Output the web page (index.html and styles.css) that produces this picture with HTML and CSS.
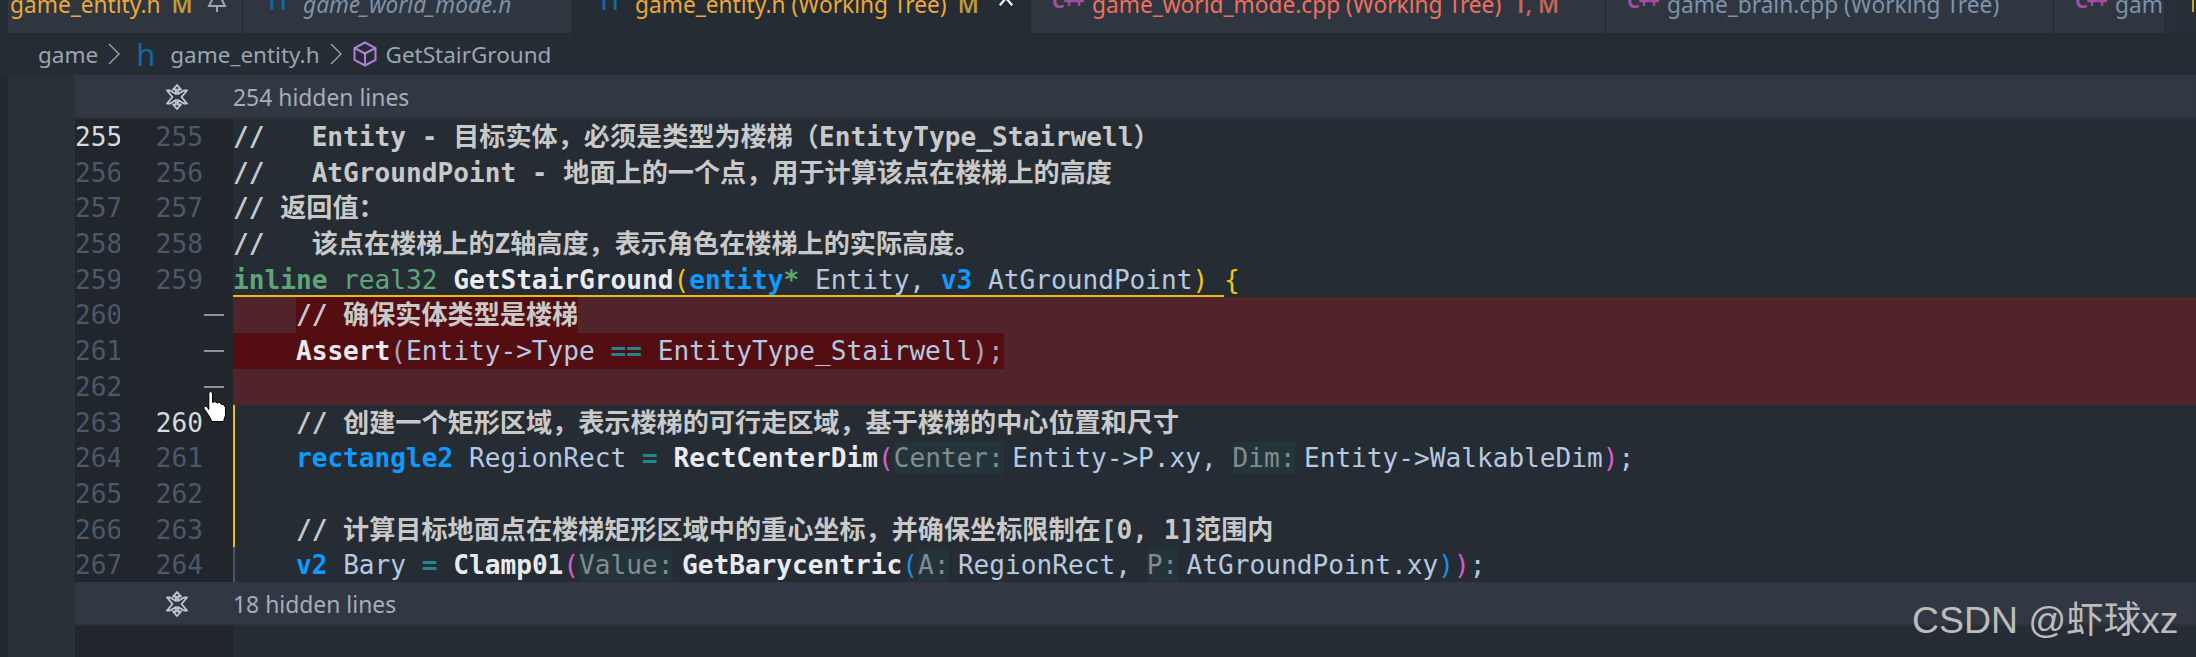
FILE: index.html
```html
<!DOCTYPE html>
<html lang="zh">
<head>
<meta charset="utf-8">
<title>game_entity.h</title>
<link rel="stylesheet" href="styles.css">
</head>
<body>
<div class="window">
  <div class="tabbar">
    <div class="tabs">
      <div class="tab t1"><span class="name gold">game_entity.h</span><span class="flag gold-flag">M</span>
        <svg class="pin" viewBox="0 0 20 14"><path d="M6 0 L2 8 H18 L14 0 M10 8 V14" fill="none" stroke="currentColor" stroke-width="2"/></svg></div>
      <div class="tab t2"><span class="hicon">h</span><span class="name italic">game_world_mode.h</span></div>
      <div class="tab t3 active"><span class="hicon">h</span><span class="name gold">game_entity.h (Working Tree)</span><span class="flag gold-flag">M</span>
        <svg class="close" viewBox="0 0 18 18"><path d="M2 0 L16 16 M16 0 L2 16" fill="none" stroke="currentColor" stroke-width="2.4"/></svg></div>
      <div class="tab t4"><span class="cicon">C++</span><span class="name red">game_world_mode.cpp (Working Tree)</span><span class="flag red-flag">T, M</span></div>
      <div class="tab t5"><span class="cicon">C++</span><span class="name blue">game_brain.cpp (Working Tree)</span></div>
      <div class="tab t6"><span class="cicon">C++</span><span class="name blue">game</span></div>
      <div class="tail"></div>
    </div>
  </div>
  <div class="crumbs">
    <span>game</span>
    <svg class="chev" viewBox="0 0 12 22"><path d="M1 1 L11 11 L1 21" fill="none" stroke="currentColor" stroke-width="1.4"/></svg>
    <span class="crumb-h">h</span>
    <span>game_entity.h</span>
    <svg class="chev" viewBox="0 0 12 22"><path d="M1 1 L11 11 L1 21" fill="none" stroke="currentColor" stroke-width="1.4"/></svg>
    <svg class="cube" viewBox="0 0 24 26"><path d="M12 1.5 L22.5 7 V19 L12 24.5 L1.5 19 V7 Z M1.5 7 L12 12.5 L22.5 7 M12 12.5 V24.5" fill="none" stroke="#b180d7" stroke-width="2"/></svg>
    <span>GetStairGround</span>
  </div>
  <div class="body">
    <div class="rail"></div>
    <div class="side"></div>
    <div class="main">
      <div class="hidden-bar">
        <div class="bar-icon"><svg viewBox="0 0 24 26"><path d="M12 1 L8 5.5 H11 V10 L5 6.5 H2 L7.5 13 L2 19.5 H5 L11 16 V20.5 H8 L12 25 L16 20.5 H13 V16 L19 19.5 H22 L16.5 13 L22 6.5 H19 L13 10 V5.5 H16 Z" fill="none" stroke="#c5c9ce" stroke-width="1.8" stroke-linejoin="round"/></svg></div>
        <span>254 hidden lines</span>
      </div>
      <div class="lines">
        <div class="row"><span class="na on">255</span><span class="nb">255</span><span class="mark"></span><div class="code cm">//   Entity - 目标实体，必须是类型为楼梯（EntityType_Stairwell）</div></div>
        <div class="row"><span class="na">256</span><span class="nb">256</span><span class="mark"></span><div class="code cm">//   AtGroundPoint - 地面上的一个点，用于计算该点在楼梯上的高度</div></div>
        <div class="row"><span class="na">257</span><span class="nb">257</span><span class="mark"></span><div class="code cm">// 返回值：</div></div>
        <div class="row"><span class="na">258</span><span class="nb">258</span><span class="mark"></span><div class="code cm">//   该点在楼梯上的Z轴高度，表示角色在楼梯上的实际高度。</div></div>
        <div class="row"><span class="na">259</span><span class="nb">259</span><span class="mark"></span><div class="code"><span class="under"><b class="grn">inline</b> <span class="grn">real32</span> <b class="fn">GetStairGround</b><span class="yel">(</span><b class="kw">entity</b><b class="grn">*</b> <span class="id">Entity,</span> <b class="kw">v3</b> <span class="id">AtGroundPoint</span><span class="yel">)</span> </span><span class="yel">{</span></div></div>
        <div class="row"><span class="na">260</span><span class="nb"></span><span class="mark"><i class="dash"></i></span><div class="code del cm">    <span class="hl">// 确保实体类型是楼梯</span></div></div>
        <div class="row"><span class="na">261</span><span class="nb"></span><span class="mark"><i class="dash"></i></span><div class="code del"><span class="hl">    <b class="fn">Assert</b><span class="dim">(</span><span class="id">Entity-&gt;Type</span> <b class="op">==</b> <span class="id">EntityType_Stairwell</span><span class="dim">);</span></span></div></div>
        <div class="row"><span class="na">262</span><span class="nb"></span><span class="mark"><i class="dash"></i></span><div class="code del"></div></div>
        <div class="row"><span class="na">263</span><span class="nb on">260</span><span class="mark"></span><div class="code chg cm">    // 创建一个矩形区域，表示楼梯的可行走区域，基于楼梯的中心位置和尺寸</div></div>
        <div class="row"><span class="na">264</span><span class="nb">261</span><span class="mark"></span><div class="code chg">    <b class="kw">rectangle2</b> <span class="id">RegionRect</span> <b class="op">=</b> <b class="fn">RectCenterDim</b><span class="pnk">(</span><span class="hint">Center:</span><span class="id">Entity-&gt;P.xy,</span> <span class="hint">Dim:</span><span class="id">Entity-&gt;WalkableDim</span><span class="pnk">)</span><span class="id">;</span></div></div>
        <div class="row"><span class="na">265</span><span class="nb">262</span><span class="mark"></span><div class="code chg"></div></div>
        <div class="row"><span class="na">266</span><span class="nb">263</span><span class="mark"></span><div class="code chg cm">    // 计算目标地面点在楼梯矩形区域中的重心坐标，并确保坐标限制在[0, 1]范围内</div></div>
        <div class="row"><span class="na">267</span><span class="nb">264</span><span class="mark"></span><div class="code same">    <b class="kw">v2</b> <span class="id">Bary</span> <b class="op">=</b> <b class="fn">Clamp01</b><span class="pnk">(</span><span class="hint">Value:</span><b class="fn">GetBarycentric</b><span class="blu">(</span><span class="hint">A:</span><span class="id">RegionRect,</span> <span class="hint">P:</span><span class="id">AtGroundPoint.xy</span><span class="blu">)</span><span class="pnk">)</span><span class="id">;</span></div></div>
      </div>
      <div class="hidden-bar">
        <div class="bar-icon"><svg viewBox="0 0 24 26"><path d="M12 1 L8 5.5 H11 V10 L5 6.5 H2 L7.5 13 L2 19.5 H5 L11 16 V20.5 H8 L12 25 L16 20.5 H13 V16 L19 19.5 H22 L16.5 13 L22 6.5 H19 L13 10 V5.5 H16 Z" fill="none" stroke="#c5c9ce" stroke-width="1.8" stroke-linejoin="round"/></svg></div>
        <span>18 hidden lines</span>
      </div>
      <div class="foot"><div class="foot-gutter"></div></div>
    </div>
  </div>
  <svg class="hand" viewBox="0 0 24 32"><path d="M6 1 C7.5 0 9.5 1 9.5 3 V11.5 L12 10.5 L14 12 L16.5 11.5 L18.5 13.5 L20.5 13.5 L22.5 16.5 V24 L20.5 30.5 H9 L6 25 L1 17.5 C.6 15.2 3 14.6 4.5 16.5 L5.8 18.5 V3 Z" fill="#fff" stroke="#000" stroke-width="1" stroke-linejoin="round"/></svg>
  <div class="mark-tiny"></div>
  <div class="watermark">CSDN @虾球xz</div>
</div>
</body>
</html>
```
FILE: styles.css
```css
* { box-sizing: border-box; }
html, body { margin: 0; padding: 0; background: #252c34; }
.window {
  position: relative;
  width: 2196px;
  height: 657px;
  overflow: hidden;
  display: flex;
  flex-direction: column;
  font-family: "Noto Sans", "Noto Sans CJK SC", sans-serif;
  background: #252c34;
}

/* tabs */
.tabbar { height: 33px; flex: none; overflow: hidden; background: #252c34; }
.tabs { display: flex; height: 60px; margin-top: -25px; padding-left: 8px; }
.tab {
  display: flex;
  align-items: center;
  height: 58px;
  flex: none;
  background: #2f3640;
  border-right: 1px solid #22272d;
  font-size: 22.7px;
  white-space: pre;
  overflow: hidden;
}
.tab.active { background: #252c34; border-right-color: #252c34; }
.t1 { width: 235px; padding-left: 2px; }
.t2 { width: 330px; padding-left: 25px; }
.t3 { width: 458px; padding-left: 27px; }
.t4 { width: 575px; padding-left: 21px; }
.t5 { width: 448px; padding-left: 21px; }
.t6 { width: 110px; padding-left: 21px; border-right: 0; }
.tail { flex: 1; background: linear-gradient(90deg, #2a3039, #272e36); }
.name { flex: none; }
.gold { color: #eaa93a; }
.red { color: #f0705f; }
.blue { color: #7d93ad; }
.italic { color: #8092a8; font-style: italic; }
.flag { font-weight: 600; margin-left: 11px; }
.gold-flag { color: #c29a32; }
.red-flag { color: #c9675a; margin-left: 13px; }
.hicon { color: #0f6b9f; font-size: 31px; width: 35px; flex: none; line-height: 1; margin-top: -11px; }
.cicon { color: #a2509f; font-weight: 700; font-size: 20px; letter-spacing: -1.5px; width: 40px; flex: none; margin-top: -8px; }
.pin { width: 20px; height: 14px; margin-left: 14px; color: #9fa8b2; flex: none; margin-top: 2px; }
.close { width: 16px; height: 16px; margin-left: 19px; color: #fff; flex: none; margin-top: -10px; }

/* breadcrumbs */
.crumbs {
  height: 42px;
  flex: none;
  display: flex;
  align-items: center;
  padding-left: 38px;
  color: #9ba6b2;
  font-size: 22.5px;
}
.chev { width: 12px; height: 22px; margin: 0 10px; color: #9ba6b2; flex: none; }
.chev:first-of-type { margin-right: 16px; }
.crumb-h { color: #0f6b9f; font-size: 31px; width: 34px; line-height: 1; }
.cube { width: 24px; height: 26px; margin: 0 9px 0 1px; flex: none; }

/* editor */
.body { flex: 1; display: flex; min-height: 0; }
.rail { width: 8px; flex: none; background: #22272e; }
.side { width: 67px; flex: none; background: #2a3038; }
.main { flex: 1; display: flex; flex-direction: column; min-width: 0; }

.hidden-bar {
  height: 44px;
  flex: none;
  display: flex;
  align-items: center;
  background: #323843;
  box-shadow: inset 0 -4px 3px -2px #2b313a;
  color: #a4aeb9;
  font-size: 22.9px;
  position: relative;
}
.bar-icon { width: 158px; display: flex; justify-content: flex-end; padding-right: 44px; flex: none; }
.bar-icon svg { width: 24px; height: 26px; display: block; }

.lines {
  height: 463px;
  flex: none;
  overflow: hidden;
  background: #252c34;
  font-family: "DejaVu Sans Mono", "Noto Sans CJK SC", monospace;
  font-size: 26.13px;
}
.row { display: flex; height: 35.7px; line-height: 36.5px; }
.na, .nb, .mark {
  flex: none;
  background: #21262d;
  text-align: right;
  color: #4b5969;
  height: 100%;
}
.na { width: 45px; }
.nb { width: 83px; }
.mark { width: 30px; display: flex; align-items: center; padding-left: 1px; }
.on { color: #d7dade; }
.dash { width: 20px; height: 2px; background: #8a929a; display: block; }

.code { flex: 1; white-space: pre; color: #b6c9e0; min-width: 0; height: 100%; }
.cm { color: #c9c9c9; font-weight: 700; }
.del { background: #51232b; }
.hl { display: inline-block; height: 100%; background: #540e12; }
.chg { box-shadow: inset 2px 0 #e8be12; }
.same { box-shadow: inset 2px 0 #4a5563; }
.under { display: inline-block; height: 100%; box-shadow: inset 0 -2px #e8be12; position: relative; z-index: 1; }
.grn { color: #5fa578; }
.fn { color: #e9ebf0; }
.kw { color: #0d9bff; }
.id { color: #b6c9e0; }
.op { color: #21878f; }
.yel { color: #f2c511; }
.pnk { color: #d65fc8; }
.blu { color: #1b8ff0; }
.dim { color: #a6a4bd; }
.hint {
  display: inline-block;
  background: #24343b;
  color: #858c8e;
  margin-right: 8.5px;
  height: 32px;
  line-height: 32px;
}

.foot { flex: 1; background: #252c34; }
.foot-gutter { width: 158px; height: 100%; background: #21262d; }

/* overlays */
.hand { position: absolute; left: 203px; top: 391px; width: 24px; height: 32px; }
.mark-tiny { position: absolute; left: 2192px; top: 0; width: 2px; height: 12px; background: #c9a227; }
.watermark {
  position: absolute;
  left: 1912px;
  top: 597px;
  font-family: "Liberation Sans", "Noto Sans CJK SC", sans-serif;
  font-size: 37.4px;
  line-height: 46px;
  color: #bcbcbc;
  white-space: pre;
}
```
